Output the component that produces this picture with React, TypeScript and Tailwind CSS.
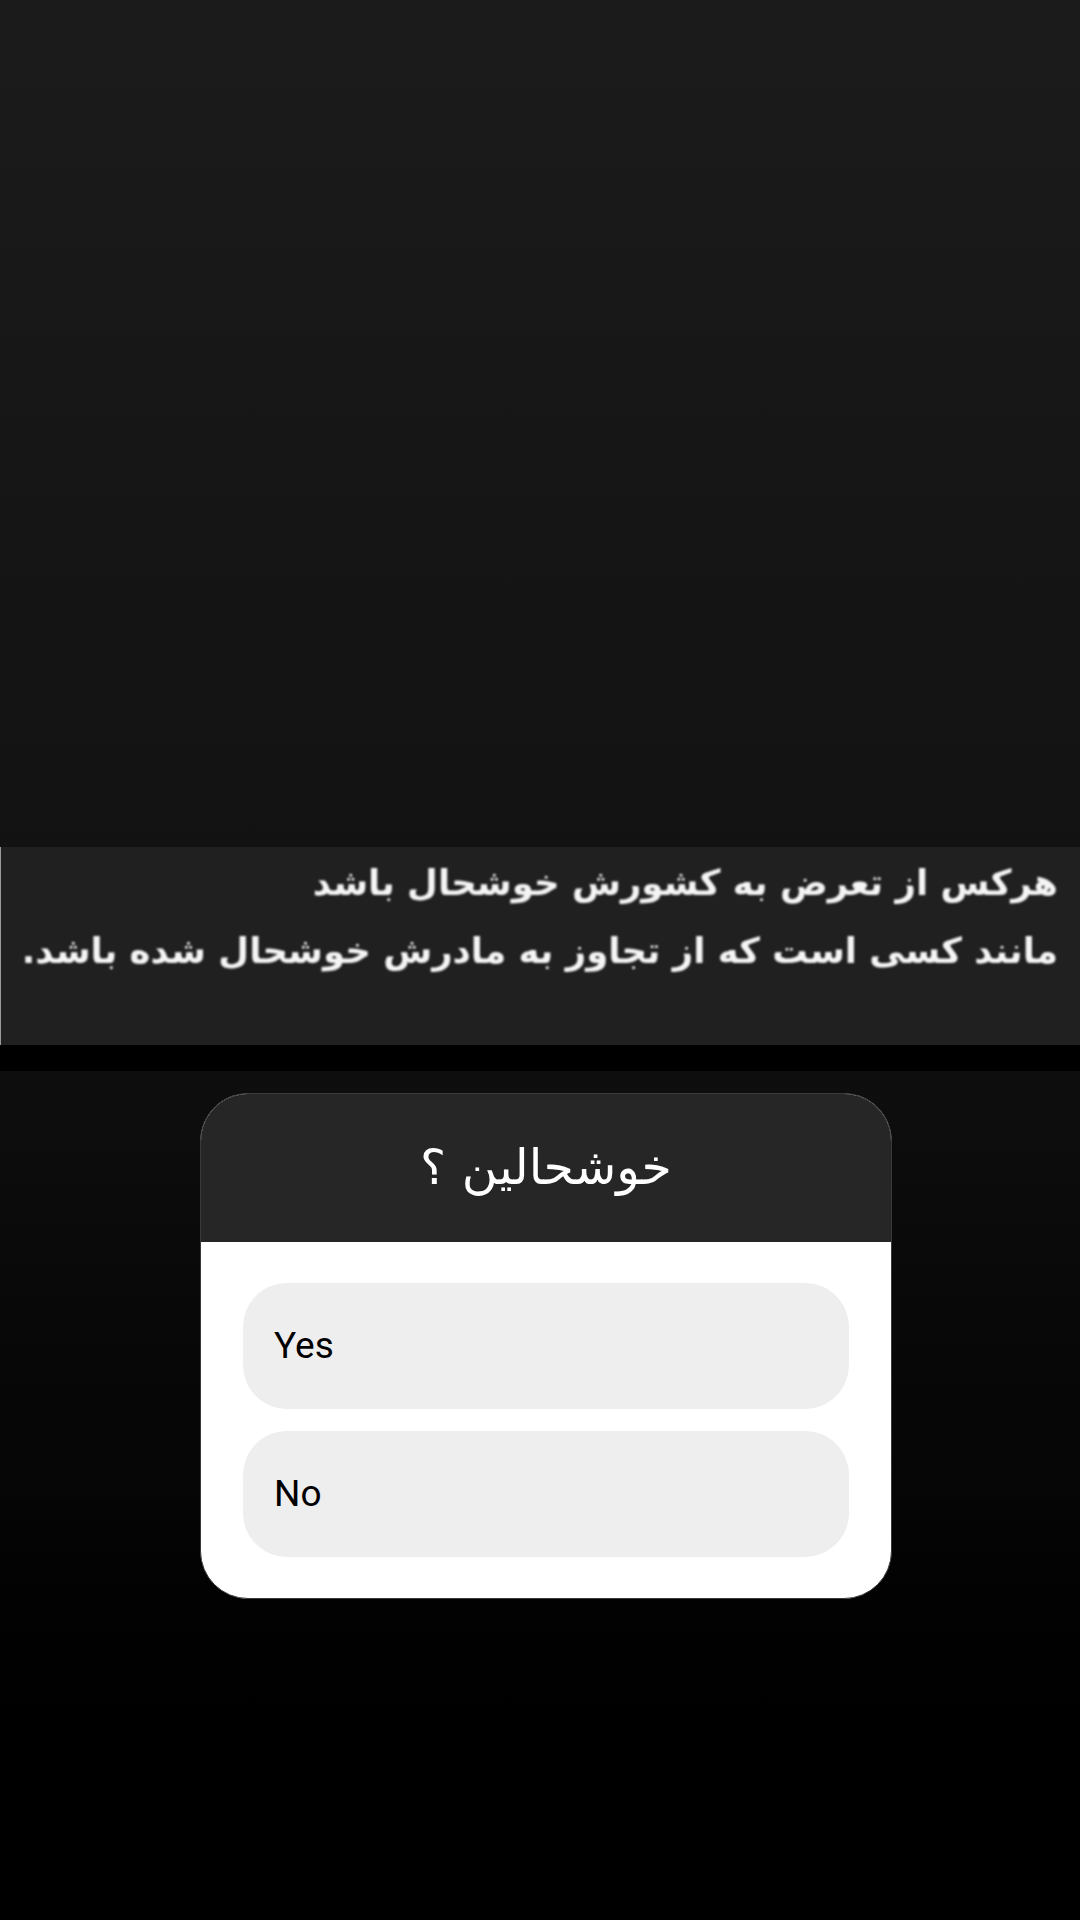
import React from 'react';

const options = ['Yes', 'No'];

function PollCard() {
  return (
    <div className="ml-[200px] mt-[22px] w-[692px] overflow-hidden rounded-[48px] border border-[#3a3a3a] bg-white">
      <div className="flex h-[148px] items-center justify-center bg-[#262626]">
        <p dir="rtl" className="font-['DejaVu_Sans',sans-serif] text-[49px] text-white">
          خوشحالین ؟
        </p>
      </div>
      <div className="flex flex-col gap-[22px] px-[42px] py-[41px]">
        {options.map((label) => (
          <button
            key={label}
            className="flex h-[126px] items-center rounded-[44px] bg-[#eeeeee] px-[31px] text-left font-['Roboto',sans-serif] text-[37px] text-black"
          >
            {label}
          </button>
        ))}
      </div>
    </div>
  );
}

export default function App() {
  return (
    <div className="flex h-[1920px] w-[1080px] flex-col bg-black">
      <div className="h-[847px] bg-gradient-to-b from-[#1b1b1b] to-[#121212]" />

      <div className="flex h-[198px] flex-col items-end border-l border-[#9a9a9a] bg-[#202020] pr-[22px] pt-[2px]">
        <div
          dir="rtl"
          className="whitespace-nowrap font-['DejaVu_Sans',sans-serif] text-[35.5px] leading-[68px] font-bold text-[#f5f5f5] blur-[1px]"
        >
          <p>هرکس از تعرض به کشورش خوشحال باشد</p>
          <p>مانند کسی است که از تجاوز به مادرش خوشحال شده باشد.</p>
        </div>
      </div>

      <div className="h-[26px] bg-black" />

      <div className="flex-1 bg-gradient-to-b from-[#0e0e0e] via-[#050505] to-black">
        <PollCard />
      </div>
    </div>
  );
}
